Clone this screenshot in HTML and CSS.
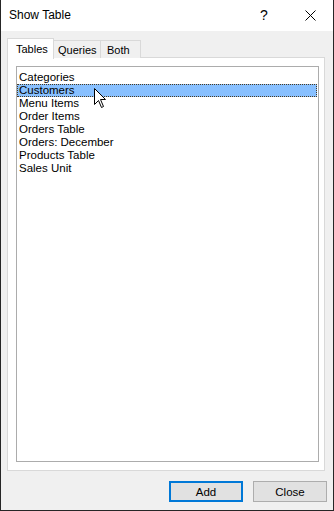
FILE: index.html
```html
<!DOCTYPE html>
<html>
<head>
<meta charset="utf-8">
<title>Show Table</title>
<link rel="stylesheet" href="styles.css">
</head>
<body>
<div class="window">
  <div class="titlebar">
    <div class="title">Show Table</div>
    <div class="tbtn help">?</div>
    <div class="tbtn close">
      <svg width="11" height="11" viewBox="0 0 11 11"><path d="M0.5 0.5 L10.5 10.5 M10.5 0.5 L0.5 10.5" stroke="#000" stroke-width="1" fill="none"/></svg>
    </div>
  </div>
  <div class="content">
    <div class="tabs">
      <div class="tab active">Tables</div>
      <div class="tab">Queries</div>
      <div class="tab">Both</div>
    </div>
    <div class="panel">
      <div class="list">
        <div class="item">Categories</div>
        <div class="item selected">Customers</div>
        <div class="item">Menu Items</div>
        <div class="item">Order Items</div>
        <div class="item">Orders Table</div>
        <div class="item">Orders: December</div>
        <div class="item">Products Table</div>
        <div class="item">Sales Unit</div>
      </div>
    </div>
  </div>
  <div class="buttons">
    <div class="btn default">Add</div>
    <div class="btn">Close</div>
  </div>
  <svg class="cursor" width="13" height="21" viewBox="0 0 13 21"><path d="M0.5 0.5 L0.5 16.5 L4.5 12.5 L7.5 19.5 L9.5 18.5 L6.5 11.5 L11.5 11.5 Z" fill="#fff" stroke="#000" stroke-width="1" stroke-linejoin="miter"/></svg>
</div>
</body>
</html>
```

FILE: styles.css
```css
html, body {
  margin: 0;
  padding: 0;
  background: #f0f0f0;
}
body {
  font-family: "Liberation Sans", Arial, sans-serif;
  font-size: 11px;
  color: #000;
}
.window {
  position: relative;
  box-sizing: border-box;
  width: 334px;
  height: 511px;
  border-left: 1px solid #262626;
  border-right: 1px solid #262626;
  border-bottom: 1px solid #262626;
  display: flex;
  flex-direction: column;
  background: #f0f0f0;
}
.titlebar {
  height: 31px;
  background: #fff;
  display: flex;
  align-items: center;
  flex-shrink: 0;
}
.title {
  flex: 1;
  padding-left: 8px;
  font-size: 12px;
  padding-bottom: 1px;
}
.tbtn {
  width: 46px;
  height: 31px;
  display: flex;
  align-items: center;
  justify-content: center;
}
.help {
  font-size: 14px;
  padding-bottom: 1px;
  box-sizing: border-box;
}
.close svg {
  display: block;
  margin-top: -1px;
}
.content {
  flex: 1;
  display: flex;
  flex-direction: column;
  padding: 7px 8px 0 6px;
}
.tabs {
  display: flex;
  align-items: flex-end;
  height: 20px;
  position: relative;
  z-index: 1;
  margin-bottom: -1px;
}
.tab {
  box-sizing: border-box;
  height: 18px;
  border: 1px solid #d9d9d9;
  border-bottom: none;
  background: #f0f0f0;
  padding: 2px 5px 0 5px;
  margin-left: -1px;
  line-height: 14px;
}
.tab:nth-child(2) { width: 48px; padding-left: 4px; }
.tab:nth-child(3) { width: 41px; padding-left: 6px; }
.tab.active {
  height: 21px;
  width: 47px;
  background: #fff;
  margin-left: 0;
  padding: 3px 0 0 8px;
  margin-bottom: -1px;
}
.panel {
  flex: 1;
  background: #fff;
  border: 1px solid #d9d9d9;
  display: flex;
  flex-direction: column;
  padding: 8px 5px 8px 8px;
}
.list {
  flex: 1;
  border: 1px solid #acacac;
  padding-top: 4px;
  background: #fff;
}
.item {
  height: 13px;
  line-height: 13px;
  padding-left: 2px;
  margin-right: 1px;
  white-space: nowrap;
  font-size: 11.5px;
}
.item.selected {
  background: #88c0ff;
  outline: 1px dotted #4a3a20;
  outline-offset: -1px;
}
.buttons {
  height: 39px;
  flex-shrink: 0;
  display: flex;
  justify-content: flex-end;
  align-items: flex-start;
  gap: 10px;
  padding: 10px 6px 0 0;
  box-sizing: border-box;
}
.btn {
  box-sizing: border-box;
  width: 74px;
  height: 21px;
  border: 1px solid #adadad;
  background: #e1e1e1;
  display: flex;
  align-items: center;
  justify-content: center;
  font-size: 11.5px;
}
.btn.default {
  border: 2px solid #0078d7;
}
.cursor {
  position: absolute;
  left: 93px;
  top: 88px;
}
```
